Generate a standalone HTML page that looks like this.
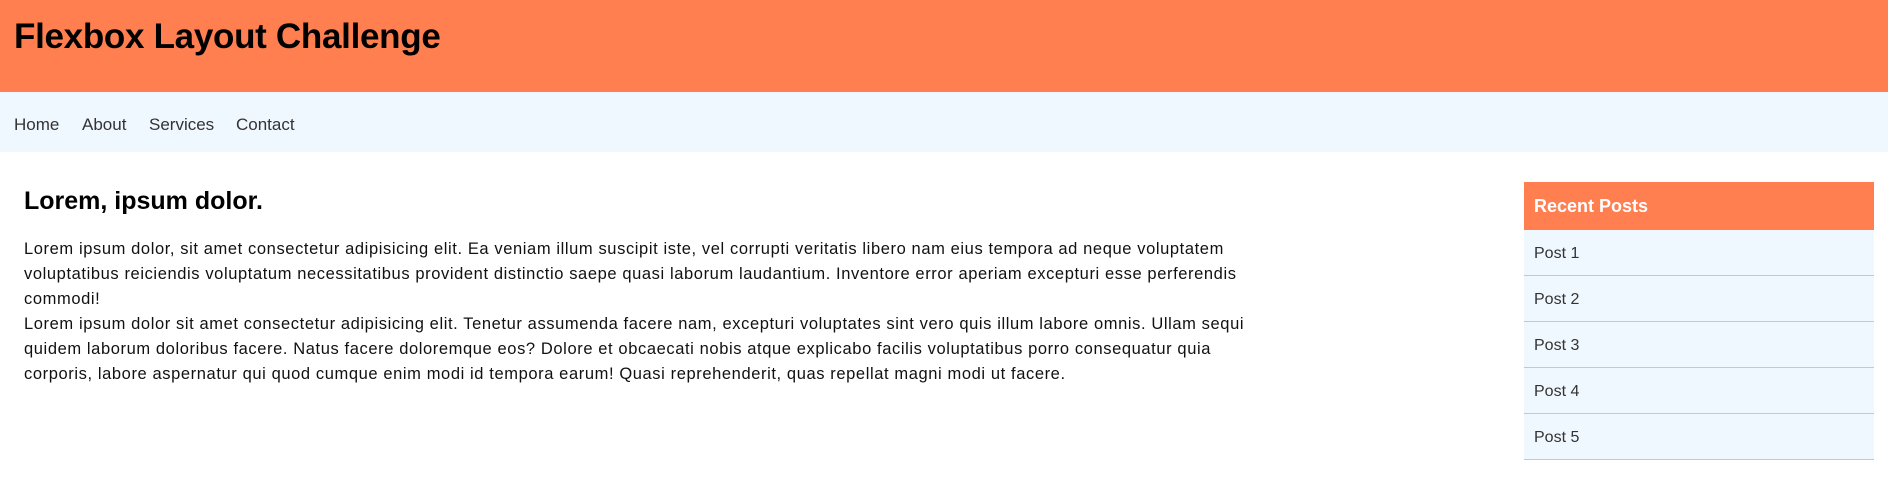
<!DOCTYPE html>
<html><head><meta charset="utf-8"><style>
*{margin:0;padding:0;box-sizing:border-box}
body{width:1888px;height:503px;overflow:hidden;background:#fff;font-family:"Liberation Sans",sans-serif;color:#111;position:relative}
.hd{position:absolute;left:0;top:0;width:1888px;height:92px;background:#ff7f50}
.hd h1{position:absolute;left:14px;top:17px;font-size:35px;font-weight:bold;color:#000;line-height:40px;letter-spacing:-0.3px}
.nav{position:absolute;left:0;top:92px;width:1888px;height:60px;background:#f0f8ff}
.nav span{position:absolute;top:23px;font-size:17px;line-height:20px;color:#333}
h2{position:absolute;left:24px;top:187px;font-size:25px;line-height:28px;font-weight:bold;color:#000}
.p{position:absolute;left:24px;top:237px;font-size:16.5px;line-height:25px;color:#111;letter-spacing:0.6px;white-space:nowrap}
.sb{position:absolute;left:1524px;top:182px;width:350px}
.sb .t{height:48px;background:#ff7f50;color:#fff;font-weight:bold;font-size:18px;line-height:48px;padding-left:10px}
.sb .r{height:46px;background:#f0f8ff;border-bottom:1px solid #c8c8c8;font-size:16px;line-height:47px;padding-left:10px;color:#333}
</style></head><body>
<div class="hd"><h1>Flexbox Layout Challenge</h1></div>
<div class="nav"><span style="left:14px">Home</span><span style="left:82px">About</span><span style="left:149px">Services</span><span style="left:236px">Contact</span></div>
<h2>Lorem, ipsum dolor.</h2>
<div class="p">Lorem ipsum dolor, sit amet consectetur adipisicing elit. Ea veniam illum suscipit iste, vel corrupti veritatis libero nam eius tempora ad neque voluptatem<br>voluptatibus reiciendis voluptatum necessitatibus provident distinctio saepe quasi laborum laudantium. Inventore error aperiam excepturi esse perferendis<br>commodi!<br>Lorem ipsum dolor sit amet consectetur adipisicing elit. Tenetur assumenda facere nam, excepturi voluptates sint vero quis illum labore omnis. Ullam sequi<br>quidem laborum doloribus facere. Natus facere doloremque eos? Dolore et obcaecati nobis atque explicabo facilis voluptatibus porro consequatur quia<br>corporis, labore aspernatur qui quod cumque enim modi id tempora earum! Quasi reprehenderit, quas repellat magni modi ut facere.</div>
<div class="sb"><div class="t">Recent Posts</div><div class="r">Post 1</div><div class="r">Post 2</div><div class="r">Post 3</div><div class="r">Post 4</div><div class="r">Post 5</div></div>
</body></html>
